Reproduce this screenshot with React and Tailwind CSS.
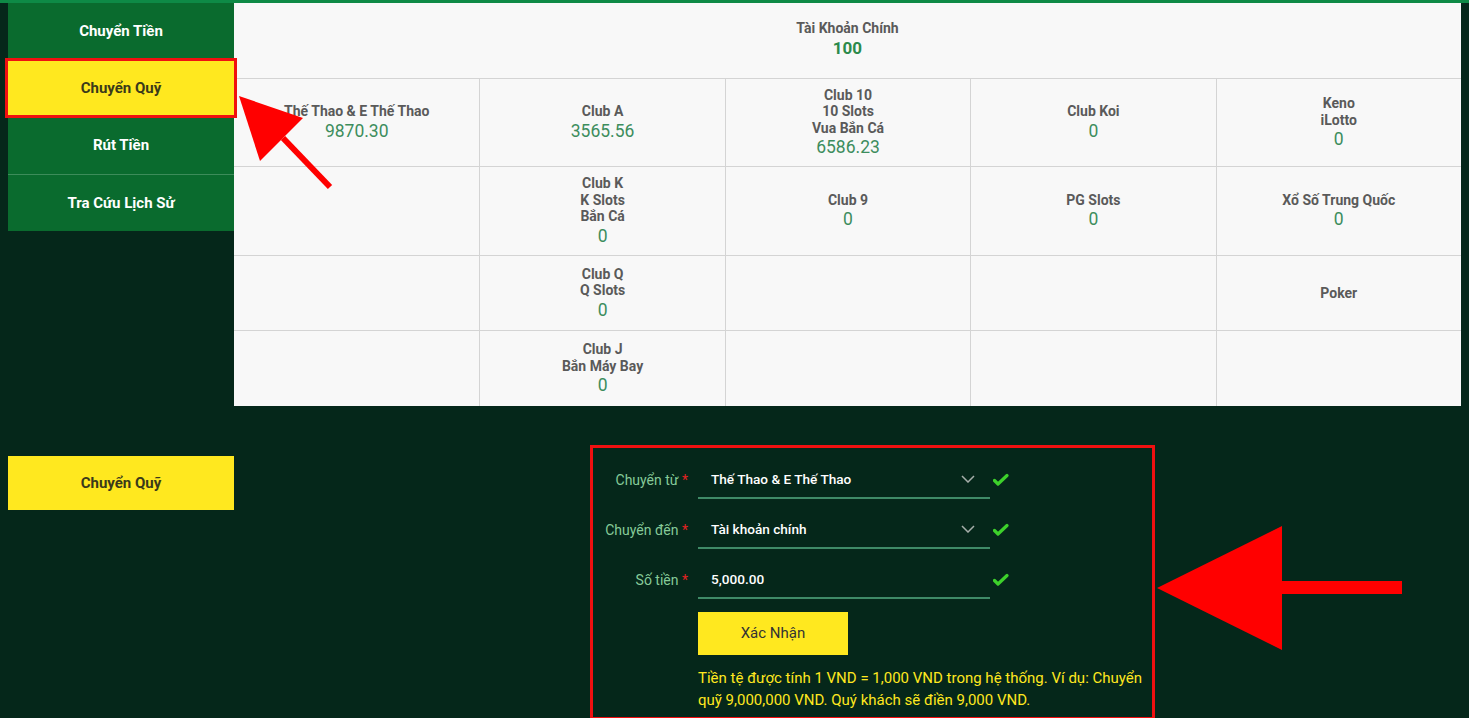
const rows = [
  {
    h: "h-[88px]",
    cells: [
      { labels: ["Thế Thao & E Thế Thao"], value: "9870.30" },
      { labels: ["Club A"], value: "3565.56" },
      { labels: ["Club 10", "10 Slots", "Vua Bắn Cá"], value: "6586.23" },
      { labels: ["Club Koi"], value: "0" },
      { labels: ["Keno", "iLotto"], value: "0" },
    ],
  },
  {
    h: "h-[89px]",
    cells: [
      null,
      { labels: ["Club K", "K Slots", "Bắn Cá"], value: "0" },
      { labels: ["Club 9"], value: "0" },
      { labels: ["PG Slots"], value: "0" },
      { labels: ["Xổ Số Trung Quốc"], value: "0" },
    ],
  },
  {
    h: "h-[75px]",
    cells: [
      null,
      { labels: ["Club Q", "Q Slots"], value: "0" },
      null,
      null,
      { labels: ["Poker"] },
    ],
  },
  {
    h: "h-[75px]",
    cells: [null, { labels: ["Club J", "Bắn Máy Bay"], value: "0" }, null, null, null],
  },
];

const menu = ["Chuyển Tiền", "Chuyển Quỹ", "Rút Tiền", "Tra Cứu Lịch Sử"];

const Check = () => (
  <svg width="16" height="14" viewBox="0 0 16 14" className="shrink-0">
    <path d="M1.5 7.5 L5 11 L14 2.5" fill="none" stroke="#3dd12b" strokeWidth="3.2" strokeLinecap="round" strokeLinejoin="round" />
  </svg>
);

const Chevron = () => (
  <svg width="14" height="8" viewBox="0 0 14 8">
    <path d="M1 1 L7 7 L13 1" fill="none" stroke="#a6aeaa" strokeWidth="1.5" />
  </svg>
);

const Field = ({ label, value, select }) => (
  <div className="flex items-center">
    <div className="w-[105px] pr-[10px] text-right text-[14px] text-[#86cb99]">
      {label} <span className="text-[#e32222]">*</span>
    </div>
    <div className="flex h-[38px] w-[292px] items-center justify-between border-b-2 border-[#3f8a67] pl-[13px] pr-[15px]">
      <span className="text-[13.6px] font-medium text-white">{value}</span>
      {select && <Chevron />}
    </div>
    <div className="ml-[3px]">
      <Check />
    </div>
  </div>
);

const App = () => {
  return (
    <div
      className="relative h-[718px] overflow-hidden border-t-[3px] border-[#0e8a46] bg-[#05271a]"
      style={{ fontFamily: "Roboto, 'Liberation Sans', sans-serif" }}
    >
      <div className="flex pl-2 pr-2">
        {/* sidebar */}
        <div className="w-[226px] shrink-0 self-start bg-[#0a6b2e]">
          {menu.map((item, i) => (
            <div
              key={item}
              className={`relative flex h-[57px] items-center justify-center text-[15px] font-bold ${
                i === 1 ? "bg-[#ffe81f] text-[#3a3a1a]" : "text-white"
              } ${i === 3 ? "border-t border-[#3d8c5a]" : ""}`}
            >
              {item}
              {i === 1 && (
                <div className="absolute -left-[3px] -right-[3px] -top-[2px] -bottom-[1px] border-[3px] border-[#f01010]" />
              )}
            </div>
          ))}
        </div>

        {/* balances table */}
        <div className="flex-1 bg-[#f8f8f8]">
          <div className="flex h-[76px] flex-col items-center justify-center border-b border-[#d4d4d4] pb-[2px]">
            <div className="text-[14px] font-bold leading-[17px] text-[#5a5a5a]">Tài Khoản Chính</div>
            <div className="text-[17px] font-bold leading-[23px] text-[#2c8a4b]">100</div>
          </div>
          {rows.map((row, ri) => (
            <div key={ri} className={`grid grid-cols-5 ${row.h} ${ri < rows.length - 1 ? "border-b border-[#d4d4d4]" : ""}`}>
              {row.cells.map((cell, ci) => (
                <div
                  key={ci}
                  className={`flex flex-col items-center justify-center text-center ${ci > 0 ? "border-l border-[#d4d4d4]" : ""}`}
                >
                  {cell &&
                    cell.labels.map((l) => (
                      <div key={l} className="text-[14px] font-bold leading-[16.5px] text-[#5a5a5a]">
                        {l}
                      </div>
                    ))}
                  {cell && cell.value && (
                    <div className="text-[17.5px] leading-[22px] text-[#3d8d5d]">{cell.value}</div>
                  )}
                </div>
              ))}
            </div>
          ))}
        </div>
      </div>

      {/* transfer form */}
      <div className="mt-[39px] flex pl-2">
        <div className="w-[226px] shrink-0 pt-[11px]">
          <div className="flex h-[54px] items-center justify-center bg-[#ffe81f] text-[15px] font-bold text-[#3a3a1a]">
            Chuyển Quỹ
          </div>
        </div>
        <div className="ml-[356px] h-[275px] w-[565px] border-[3px] border-[#f01010] pt-[13px]">
          <div className="flex flex-col gap-[12px]">
            <Field label="Chuyển từ" value="Thế Thao & E Thế Thao" select />
            <Field label="Chuyển đến" value="Tài khoản chính" select />
            <Field label="Số tiền" value="5,000.00" />
          </div>
          <div className="ml-[105px] mt-[13px]">
            <button className="h-[43px] w-[150px] bg-[#ffe81f] text-[15px] text-[#333]">Xác Nhận</button>
            <p className="mt-[12px] w-[452px] text-[15px] leading-[22px] text-[#ffe81f]">
              Tiền tệ được tính 1 VND = 1,000 VND trong hệ thống. Ví dụ: Chuyển quỹ 9,000,000 VND. Quý khách sẽ điền 9,000 VND.
            </p>
          </div>
        </div>
      </div>

      {/* annotation arrows */}
      <svg className="pointer-events-none absolute left-0 top-0" width="1469" height="718">
        <polygon points="239,93 303,115 260,158" fill="#ff0000" />
        <line x1="283" y1="135" x2="330" y2="184" stroke="#ff0000" strokeWidth="6" />
        <polygon points="1157,585 1282,523 1282,647" fill="#ff0000" />
        <rect x="1280" y="578" width="122" height="13" fill="#ff0000" />
      </svg>
    </div>
  );
};

export default App;
